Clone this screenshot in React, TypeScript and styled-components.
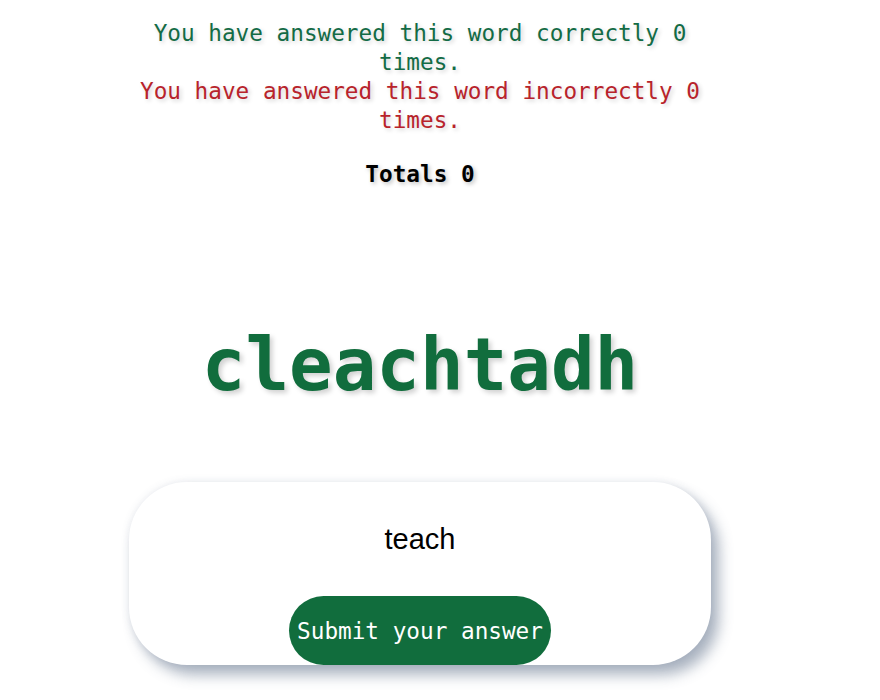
import styled, { createGlobalStyle } from 'styled-components';

const GlobalStyle = createGlobalStyle`
  body {
    margin: 0;
    background: #ffffff;
    font-family: 'DejaVu Sans Mono', 'Liberation Mono', monospace;
  }
`;

const Page = styled.main`
  width: 840px;
  display: flex;
  flex-direction: column;
  align-items: center;
  padding: 19px 0 40px;
`;

const Stats = styled.div`
  width: 600px;
  text-align: center;
  font-size: 22.7px;
  line-height: 29px;
  text-shadow: 2px 2px 4px rgba(0, 0, 0, 0.18);
`;

const StatLine = styled.p<{ $tone: 'right' | 'wrong' }>`
  margin: 0;
  color: ${({ $tone }) => ($tone === 'right' ? '#136b45' : '#b8232b')};
`;

const Totals = styled.h3`
  margin: 25px 0 0;
  font-size: 22.7px;
  line-height: 29px;
  font-weight: bold;
  color: #000000;
  text-shadow: 2px 2px 4px rgba(0, 0, 0, 0.25);
`;

const Word = styled.h1`
  margin: 133px 0 0;
  font-size: 72.5px;
  line-height: 86px;
  font-weight: bold;
  color: #116d3d;
  text-shadow: 3px 3px 5px rgba(0, 0, 0, 0.18);
`;

const AnswerCard = styled.form`
  margin-top: 74px;
  width: 582px;
  height: 183px;
  box-sizing: border-box;
  border-radius: 58px;
  background: #ffffff;
  box-shadow: 8px 10px 14px rgba(70, 90, 120, 0.45), 0 0 8px rgba(70, 90, 120, 0.12);
  display: flex;
  flex-direction: column;
  align-items: center;
  justify-content: space-between;
  padding-top: 37px;
`;

const AnswerInput = styled.input`
  width: 400px;
  border: none;
  outline: none;
  background: transparent;
  text-align: center;
  font-family: 'Liberation Sans', Arial, sans-serif;
  font-size: 29px;
  line-height: 40px;
  padding: 0;
  color: #000000;
`;

const SubmitButton = styled.button`
  width: 262px;
  height: 69px;
  border: none;
  border-radius: 35px;
  background: #116d3d;
  color: #ffffff;
  font-family: 'DejaVu Sans Mono', 'Liberation Mono', monospace;
  font-size: 22.7px;
  padding: 0;
  cursor: pointer;
`;

const App = () => {
  return (
    <>
      <GlobalStyle />
      <Page>
        <Stats>
          <StatLine $tone="right">You have answered this word correctly 0 times.</StatLine>
          <StatLine $tone="wrong">You have answered this word incorrectly 0 times.</StatLine>
        </Stats>
        <Totals>Totals 0</Totals>
        <Word>cleachtadh</Word>
        <AnswerCard onSubmit={(e) => e.preventDefault()}>
          <AnswerInput defaultValue="teach" />
          <SubmitButton type="submit">Submit your answer</SubmitButton>
        </AnswerCard>
      </Page>
    </>
  );
};

export default App;
